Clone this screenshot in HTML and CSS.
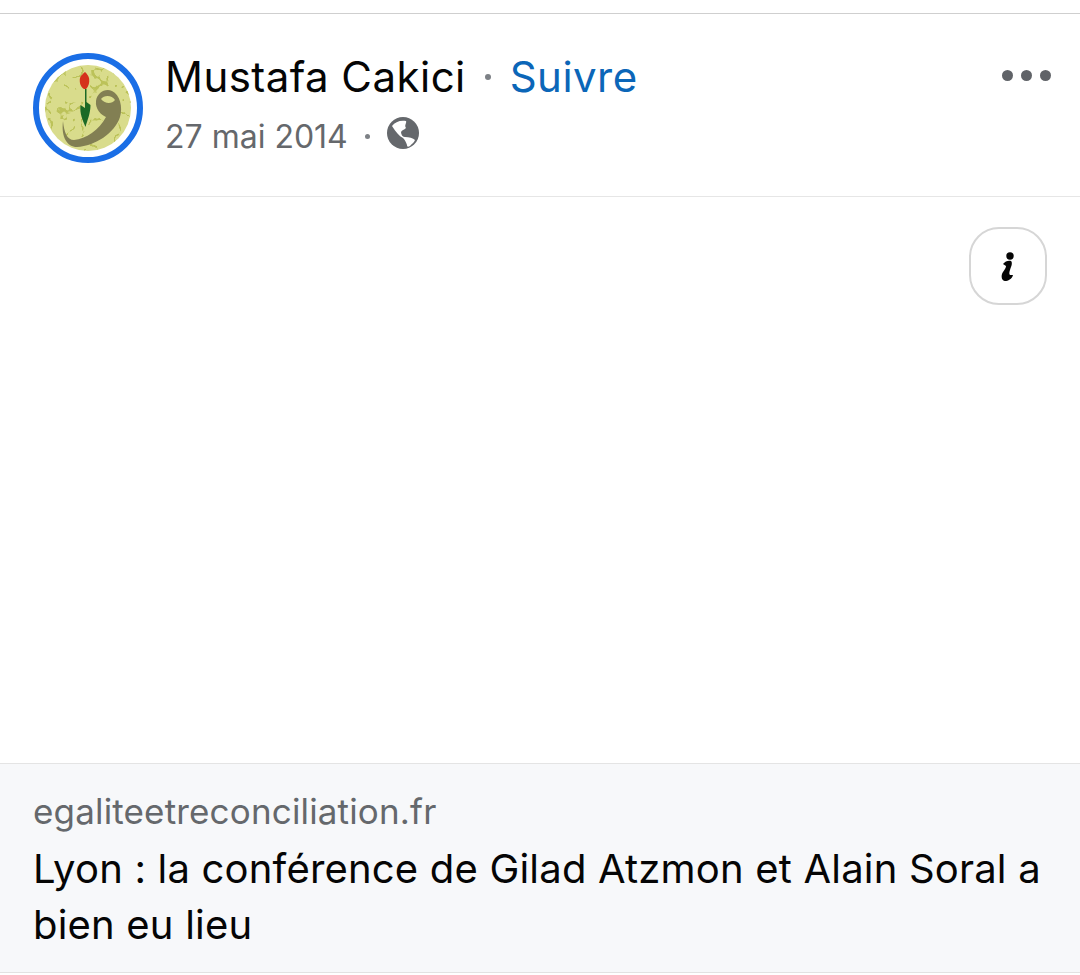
FILE: index.html
```html
<!DOCTYPE html>
<html lang="fr">
<head>
<meta charset="utf-8">
<title>Mustafa Cakici</title>
<link rel="stylesheet" href="styles.css">
</head>
<body>
<article class="post">
  <header class="post-header">
    <svg class="avatar" viewBox="0 0 110 110" aria-hidden="true">
      <defs>
        <filter id="soft"><feGaussianBlur stdDeviation="0.45"/></filter>
        <filter id="cracks" x="0" y="0" width="100%" height="100%">
          <feTurbulence type="turbulence" baseFrequency="0.06" numOctaves="2" seed="11"/>
          <feColorMatrix type="matrix" values="0 0 0 0 0.50  0 0 0 0 0.54  0 0 0 0 0.10  0 0 0 -26 2.6"/>
        </filter>
        <clipPath id="disc"><circle cx="55" cy="55" r="43"/></clipPath>
      </defs>
      <circle cx="55" cy="55" r="52" fill="#fff" stroke="#1a6ee6" stroke-width="6"/>
      <circle cx="55" cy="55" r="43" fill="#d9dc8c"/>
      <g clip-path="url(#disc)">
        <rect x="10" y="10" width="90" height="90" filter="url(#cracks)"/>
      </g>
      <g filter="url(#soft)">
        <path d="M52 19c2 2 3 3 4 6 1 5-1 9-3 11h-2c-3-2-5-6-4-11 1-3 3-4 5-6z" fill="#d5301c"/>
        <path d="M52 36h1.500v13l4 3c0 8-3 15-5 22-3-7-6-14-5-22l4.500 3z" fill="#1f6a26"/>
        <path fill-rule="evenodd" d="M30 68C31 79 34 87 41 87C53 86 66 77 73 64C68 62 62 56 63 48C64 40 72 35 79 38C87 42 90 54 87 64C82 80 62 93 44 94C34 94 28 84 30 68ZM68 46C71 42 79 42 82 47C79 51 72 51 68 46Z" fill="#827f52"/>
      </g>
    </svg>
    <div class="meta">
      <div class="title-row">
        <span class="name">Mustafa Cakici</span>
        <span class="dot-sep"></span>
        <span class="follow">Suivre</span>
      </div>
      <div class="sub-row">
        <span class="date">27 mai 2014</span>
        <span class="dot-sep small"></span>
        <svg class="globe" viewBox="0 0 32 32" aria-hidden="true">
          <circle cx="16" cy="16" r="16" fill="#65686c"/>
          <path d="M5 9C8 5 13 3 19 4C20 6 17 8 19 11C17 13 15 13 14 15C14 18 16 20 18 20C22 20 26 21 28 23C27 26 24 27 23 29C21 30 20 30 20 28C19 25 18 23 16 21C12 19 9 15 5 9Z" fill="#fff"/>
        </svg>
      </div>
    </div>
    <div class="more" aria-label="Plus"><i></i><i></i><i></i></div>
  </header>
  <section class="media">
    <button class="info" aria-label="Informations">
      <svg viewBox="0 0 16 32" width="16" height="32" aria-hidden="true">
        <circle cx="10" cy="6" r="3.700" fill="#050505"/>
        <path d="M3 14C5 11 9 10 11 11C13 13 11 17 10 20C9 23 9 25 11 25L13 25C12 29 8 31 5 31C2 31 1 27 2 24C3 21 6 19 6 16C5 15 4 15 3 14Z" fill="#050505"/>
      </svg>
    </button>
  </section>
  <footer class="link-card">
    <div class="domain">egaliteetreconciliation.fr</div>
    <div class="headline">Lyon : la conférence de Gilad Atzmon et Alain Soral a bien eu lieu</div>
  </footer>
</article>
</body>
</html>
```

FILE: styles.css
```css
* { box-sizing: border-box; }
html, body { margin: 0; background: #fff; }
body { width: 1080px; height: 975px; overflow: hidden; font-family: Inter, "Noto Sans", sans-serif; }
.post { padding-top: 13px; }
.post-header {
  height: 184px;
  border-top: 1px solid #cfcfcf;
  border-bottom: 1px solid #e6e6e6;
  display: flex;
  padding: 39px 29px 0 33px;
}
.avatar { width: 110px; height: 110px; flex: none; }
.meta { margin-left: 22px; flex: 1; }
.title-row { display: flex; align-items: center; height: 48px; }
.name, .follow { font-size: 42px; line-height: 48px; letter-spacing: 0.45px; }
.name { color: #050505; }
.follow { color: #0b66b8; }
.dot-sep { width: 6px; height: 6px; border-radius: 50%; background: #7d8186; margin: 0 19px 0 19px; }
.dot-sep.small { width: 5px; height: 5px; margin: -2px 18px 0 17px; }
.sub-row { display: flex; align-items: center; height: 48px; margin-top: 12px; }
.date { font-size: 32px; line-height: 48px; color: #65686c; }
.globe { width: 32px; height: 32px; margin: -8px 0 0 -1px; }
.more { display: flex; gap: 8px; margin-top: 17px; height: 11px; }
.more i { width: 11px; height: 11px; border-radius: 50%; background: #606368; }
.media { height: 566px; display: flex; justify-content: flex-end; align-items: flex-start; padding: 30px 33px 0 0; }
.info {
  width: 78px; height: 78px; padding: 0;
  border: 2px solid #d6d6d6; border-radius: 30px; background: #fff;
  display: flex; align-items: center; justify-content: center;
}
.link-card {
  height: 210px;
  background: #f7f8fa;
  border-top: 1px solid #e4e4e4;
  border-bottom: 1px solid #e2e2e2;
  padding: 24px 33px 0;
}
.domain { font-size: 35px; line-height: 46px; letter-spacing: 0.16px; color: #65686c; }
.headline { font-size: 40px; line-height: 56px; letter-spacing: 0.19px; color: #050505; margin-top: 7px; }
```
